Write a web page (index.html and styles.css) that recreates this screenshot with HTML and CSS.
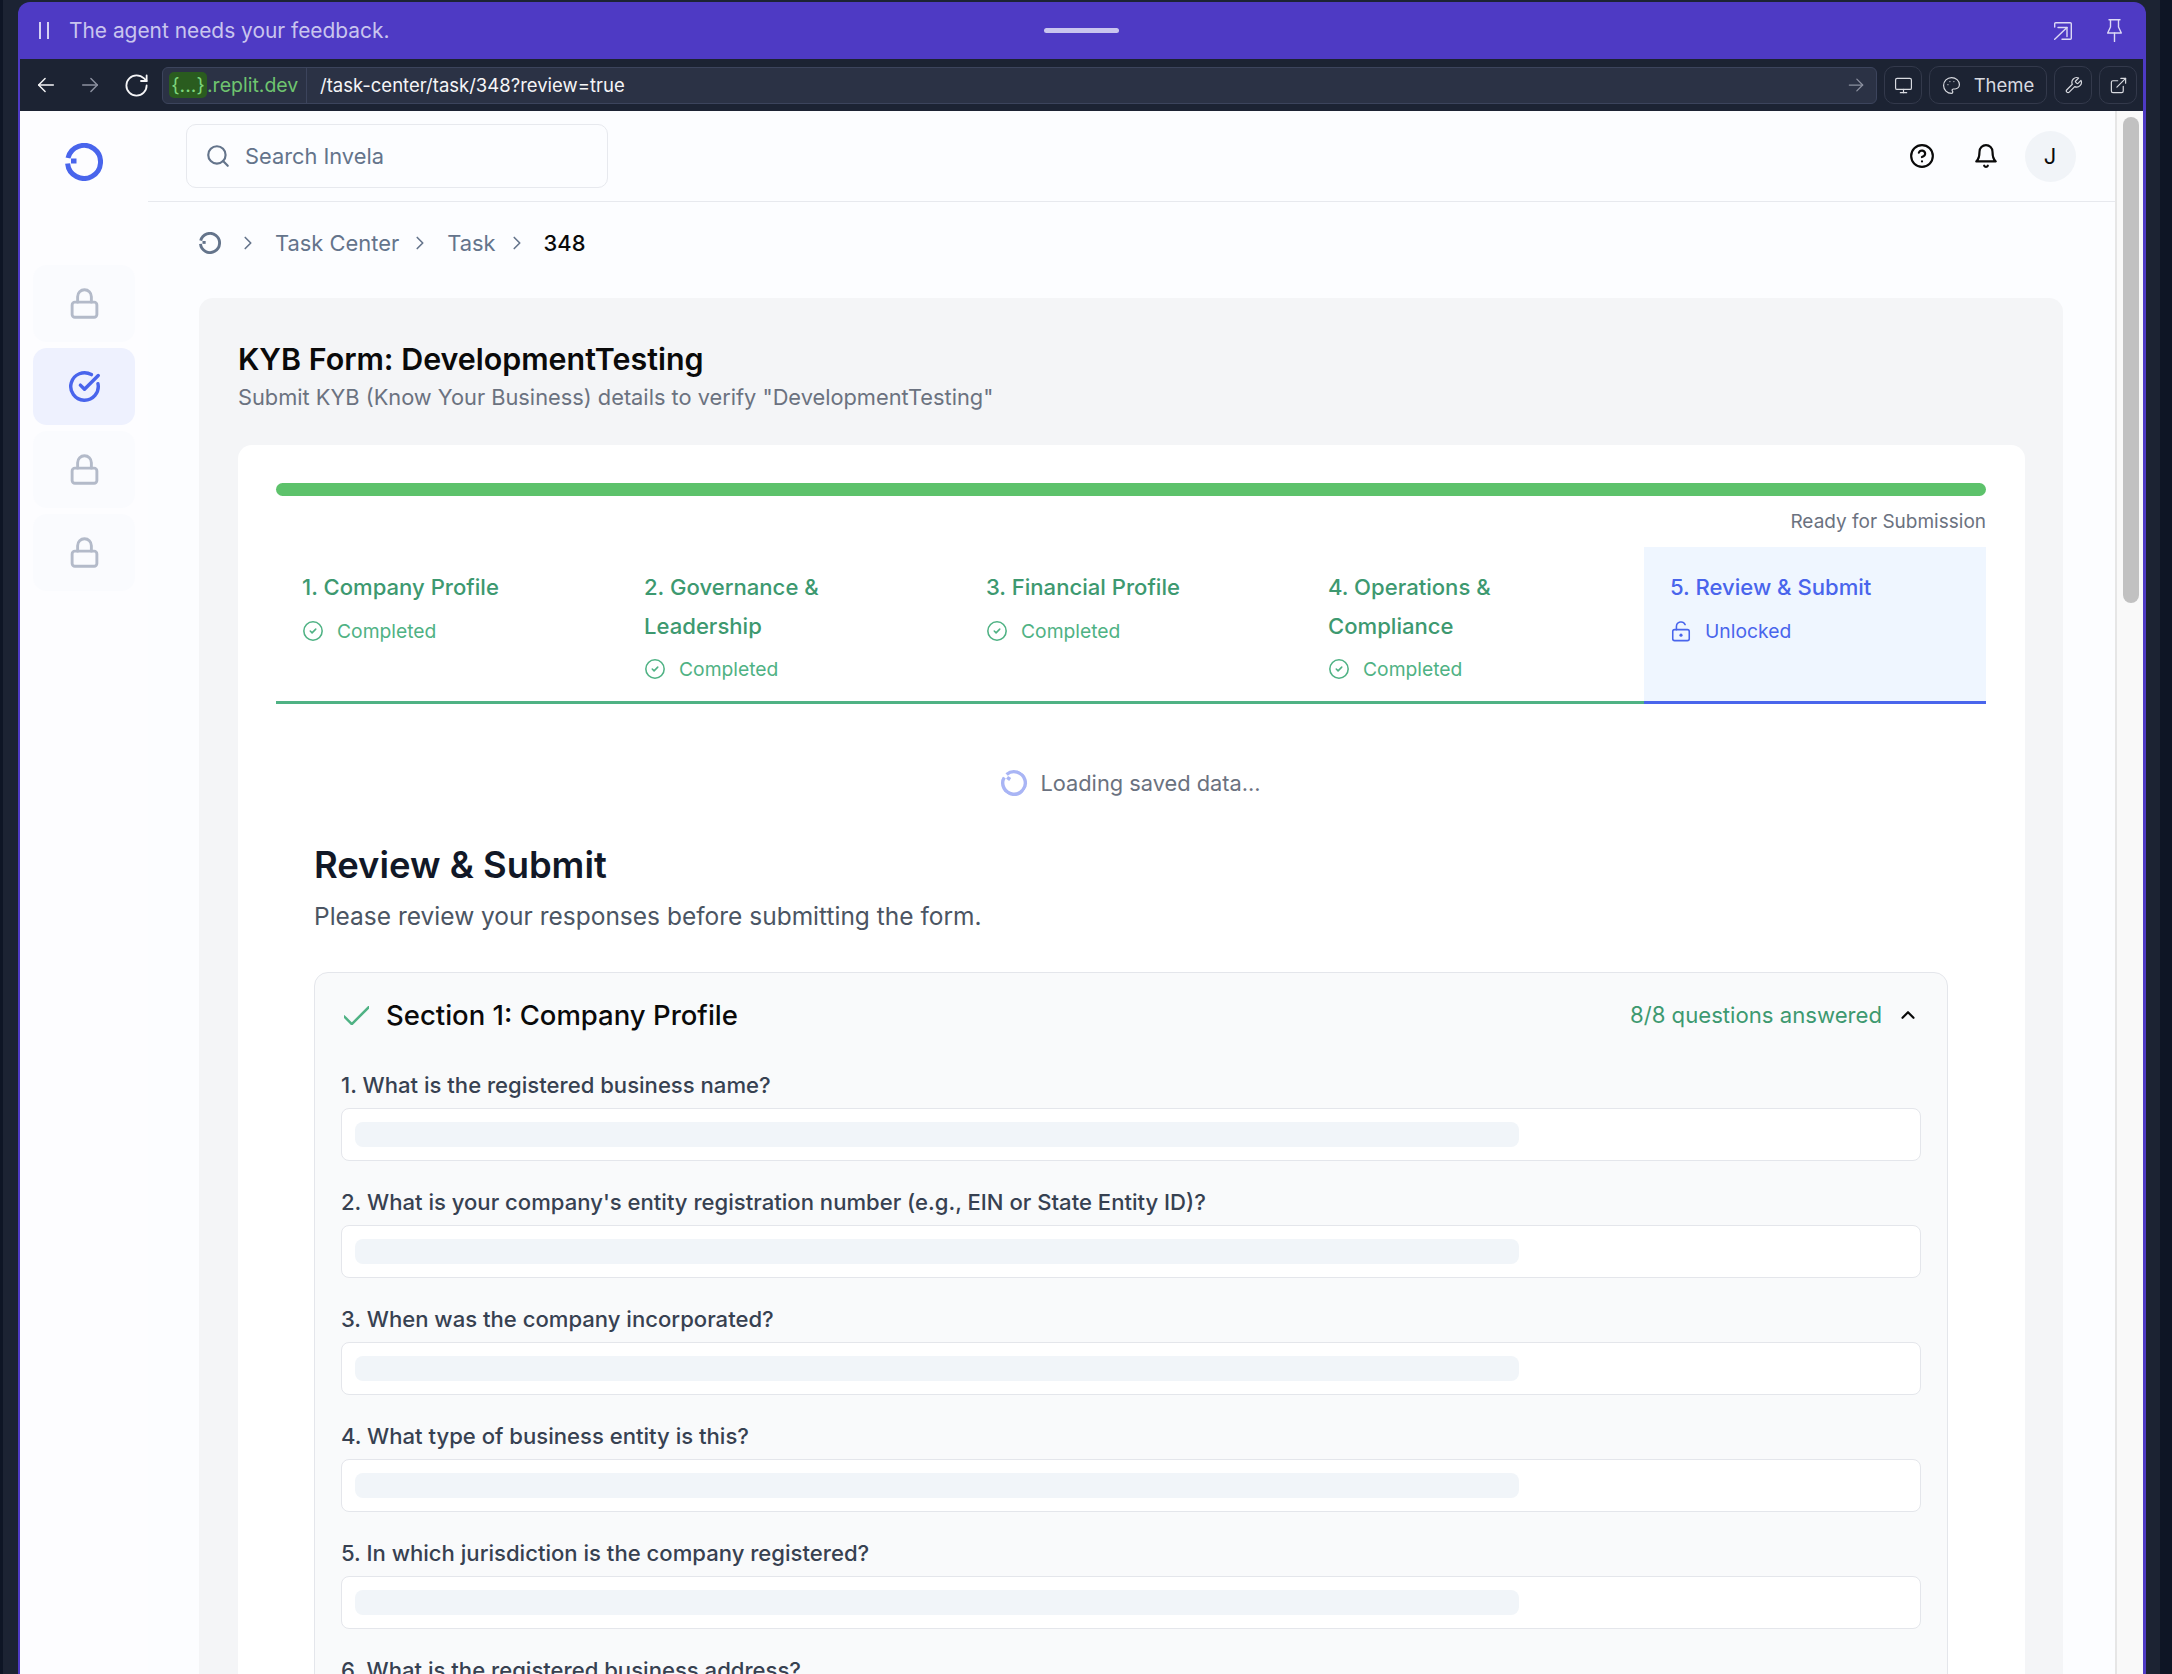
FILE: index.html
```html
<!DOCTYPE html>
<html lang="en">
<head>
  <meta charset="UTF-8">
  <title>KYB Form: DevelopmentTesting</title>
  <link rel="stylesheet" href="styles.css">
</head>
<body>
  <svg class="sprite" width="0" height="0">
    <symbol id="logo" viewBox="0 0 38 38">
      <path d="M3 15A16.5 16.5 0 1 1 2.6 20.5" fill="none" stroke="currentColor" stroke-width="5"/>
      <path d="M6 15.5h5.5v5H6z" fill="currentColor"/>
    </symbol>
    <symbol id="lock" viewBox="0 0 24 24">
      <rect x="3" y="11" width="18" height="11" rx="2"/><path d="M7 11V7a5 5 0 0 1 10 0v4"/>
    </symbol>
    <symbol id="done" viewBox="0 0 24 24">
      <circle cx="12" cy="12" r="10"/><path d="m9 12 2 2 4-4"/>
    </symbol>
    <symbol id="chev" viewBox="0 0 24 24">
      <path d="m9 18 6-6-6-6"/>
    </symbol>
  </svg>

  <div class="desk">
    <div class="frame">
      <!-- agent status bar -->
      <div class="agent-bar">
        <span class="pause"></span>
        <span class="agent-text">The agent needs your feedback.</span>
        <span class="handle"></span>
        <svg class="ico agent-open" viewBox="0 0 18 18"><path d="M.7 5V1.7a1 1 0 0 1 1-1h14.6a1 1 0 0 1 1 1v14.6a1 1 0 0 1-1 1H8"/><path d="M.7 17.3 13 5.5"/><path d="M4 5.5h9v9"/></svg>
        <svg class="ico agent-pin" viewBox="0 0 15 23"><path d="M2 .7h11"/><path d="M3.5 .7V8L.7 14h13.6l-2.8-6V.7"/><path d="M7.5 14v8.5"/></svg>
      </div>

      <div class="browser">
        <!-- url bar -->
        <div class="url-bar">
          <svg class="ico nav-ico" viewBox="0 0 24 24"><path d="M20 12H4"/><path d="m11 19-7-7 7-7"/></svg>
          <svg class="ico nav-ico dim" viewBox="0 0 24 24"><path d="M4 12h16"/><path d="m13 5 7 7-7 7"/></svg>
          <svg class="ico nav-ico" viewBox="0 0 24 24"><path d="M21 12a9 9 0 1 1-9-9c2.52 0 4.93 1 6.74 2.74L21 8"/><path d="M21 3v5h-5"/></svg>
          <div class="url-box">
            <span class="url-chip">{...}</span><span class="url-domain">.replit.dev</span>
            <span class="url-path">/task-center/task/348?review=true</span>
            <svg class="ico url-go" viewBox="0 0 24 24"><path d="M4 12h16"/><path d="m13 5 7 7-7 7"/></svg>
          </div>
          <span class="tool-btn">
            <svg class="ico tool-ico" viewBox="0 0 24 24"><rect x="2" y="3" width="20" height="14" rx="2"/><path d="M8 21h8"/><path d="M12 17v4"/></svg>
          </span>
          <span class="tool-btn theme-btn">
            <svg class="ico tool-ico" viewBox="0 0 24 24"><path d="M12 2C6.5 2 2 6.5 2 12s4.5 10 10 10c.926 0 1.648-.746 1.648-1.688 0-.437-.18-.835-.437-1.125-.29-.289-.438-.652-.438-1.125a1.64 1.64 0 0 1 1.668-1.668h1.996c3.051 0 5.555-2.503 5.555-5.554C21.965 6.012 17.461 2 12 2z"/><path d="M7.5 11h.01"/><path d="M10 7h.01"/><path d="M15 7h.01"/></svg>
            Theme
          </span>
          <span class="tool-btn">
            <svg class="ico tool-ico" viewBox="0 0 24 24"><path d="M14.7 6.3a1 1 0 0 0 0 1.4l1.6 1.6a1 1 0 0 0 1.4 0l3.77-3.77a6 6 0 0 1-7.94 7.94l-6.91 6.91a2.12 2.12 0 0 1-3-3l6.91-6.91a6 6 0 0 1 7.94-7.94l-3.76 3.76z"/></svg>
          </span>
          <span class="tool-btn">
            <svg class="ico tool-ico" viewBox="0 0 24 24"><path d="M15 3h6v6"/><path d="M10 14 21 3"/><path d="M18 13v6a2 2 0 0 1-2 2H5a2 2 0 0 1-2-2V8a2 2 0 0 1 2-2h6"/></svg>
          </span>
        </div>

        <div class="app">
          <!-- sidebar -->
          <aside class="sidebar">
            <svg class="side-logo"><use href="#logo"/></svg>
            <div class="side-item"><svg class="ico side-ico"><use href="#lock"/></svg></div>
            <div class="side-item active">
              <svg class="ico side-ico" viewBox="0 0 24 24"><path d="M21.801 10A10 10 0 1 1 17 3.335"/><path d="m9 11 3 3L22 4"/></svg>
            </div>
            <div class="side-item"><svg class="ico side-ico"><use href="#lock"/></svg></div>
            <div class="side-item"><svg class="ico side-ico"><use href="#lock"/></svg></div>
          </aside>

          <main class="main">
            <header class="top-bar">
              <div class="search">
                <svg class="ico search-ico" viewBox="0 0 24 24"><circle cx="11" cy="11" r="8"/><path d="m21 21-4.3-4.3"/></svg>
                Search Invela
              </div>
              <svg class="ico top-ico" viewBox="0 0 24 24"><circle cx="12" cy="12" r="10"/><path d="M9.09 9a3 3 0 0 1 5.83 1c0 2-3 3-3 3"/><path d="M12 17h.01"/></svg>
              <svg class="ico top-ico" viewBox="0 0 24 24"><path d="M6 8a6 6 0 0 1 12 0c0 7 3 9 3 9H3s3-2 3-9"/><path d="M10.3 21a1.94 1.94 0 0 0 3.4 0"/></svg>
              <div class="avatar">J</div>
            </header>

            <nav class="crumbs">
              <svg class="crumb-logo"><use href="#logo"/></svg>
              <svg class="ico crumb-chev"><use href="#chev"/></svg>
              <span>Task Center</span>
              <svg class="ico crumb-chev"><use href="#chev"/></svg>
              <span>Task</span>
              <svg class="ico crumb-chev"><use href="#chev"/></svg>
              <span class="crumb-now">348</span>
            </nav>

            <section class="task-card">
              <h1 class="task-title">KYB Form: DevelopmentTesting</h1>
              <p class="task-sub">Submit KYB (Know Your Business) details to verify "DevelopmentTesting"</p>

              <div class="form-card">
                <div class="progress"></div>
                <div class="progress-label">Ready for Submission</div>

                <div class="tabs">
                  <div class="tab">
                    <div class="tab-title">1. Company Profile</div>
                    <div class="tab-status"><svg class="ico status-ico"><use href="#done"/></svg>Completed</div>
                  </div>
                  <div class="tab">
                    <div class="tab-title">2. Governance &amp; Leadership</div>
                    <div class="tab-status"><svg class="ico status-ico"><use href="#done"/></svg>Completed</div>
                  </div>
                  <div class="tab">
                    <div class="tab-title">3. Financial Profile</div>
                    <div class="tab-status"><svg class="ico status-ico"><use href="#done"/></svg>Completed</div>
                  </div>
                  <div class="tab">
                    <div class="tab-title">4. Operations &amp; Compliance</div>
                    <div class="tab-status"><svg class="ico status-ico"><use href="#done"/></svg>Completed</div>
                  </div>
                  <div class="tab current">
                    <div class="tab-title">5. Review &amp; Submit</div>
                    <div class="tab-status">
                      <svg class="ico status-ico" viewBox="0 0 24 24"><rect x="3" y="10.5" width="18" height="12" rx="2"/><path d="M7 10.5V7a5 5 0 0 1 9.5-2"/><path class="key-dot" d="M12 16.5h.01"/></svg>Unlocked
                    </div>
                  </div>
                </div>

                <div class="loading">
                  <svg class="spinner"><use href="#logo"/></svg>
                  Loading saved data...
                </div>

                <div class="review">
                  <h2 class="review-title">Review &amp; Submit</h2>
                  <p class="review-sub">Please review your responses before submitting the form.</p>

                  <div class="section">
                    <div class="section-head">
                      <svg class="ico section-check" viewBox="4 5.5 16 12"><path d="M20 6 9 17l-5-5"/></svg>
                      <h3 class="section-title">Section 1: Company Profile</h3>
                      <span class="section-count">8/8 questions answered</span>
                      <svg class="ico section-chev" viewBox="0 0 24 24"><path d="m18 15-6-6-6 6"/></svg>
                    </div>

                    <div class="question">
                      <div class="q-label">1. What is the registered business name?</div>
                      <div class="q-field"><div class="q-skeleton"></div></div>
                    </div>
                    <div class="question">
                      <div class="q-label">2. What is your company's entity registration number (e.g., EIN or State Entity ID)?</div>
                      <div class="q-field"><div class="q-skeleton"></div></div>
                    </div>
                    <div class="question">
                      <div class="q-label">3. When was the company incorporated?</div>
                      <div class="q-field"><div class="q-skeleton"></div></div>
                    </div>
                    <div class="question">
                      <div class="q-label">4. What type of business entity is this?</div>
                      <div class="q-field"><div class="q-skeleton"></div></div>
                    </div>
                    <div class="question">
                      <div class="q-label">5. In which jurisdiction is the company registered?</div>
                      <div class="q-field"><div class="q-skeleton"></div></div>
                    </div>
                    <div class="question">
                      <div class="q-label">6. What is the registered business address?</div>
                      <div class="q-field"><div class="q-skeleton"></div></div>
                    </div>
                  </div>
                </div>
              </div>
            </section>
          </main>

          <div class="scroll-track"><div class="scroll-thumb"></div></div>
        </div>
      </div>
    </div>
  </div>
</body>
</html>
```

FILE: styles.css
```css
/* General styles */
html, body {
  height: 1674px;
  overflow: hidden;
}

body {
  margin: 0;
  padding-left: 3px;
  background-color: #0e1525;
  font-family: Inter, "Liberation Sans", sans-serif;
  color: #111827;
}

h1, h2, h3, p {
  margin: 0;
}

.sprite {
  display: block;
}

.ico {
  display: block;
  flex: none;
  fill: none;
  stroke: currentColor;
  stroke-width: 2;
  stroke-linecap: round;
  stroke-linejoin: round;
}

.desk {
  width: 2157px;
  height: 1674px;
  padding: 2px 14px 0 15px;
  box-sizing: border-box;
  background-color: #1c2333;
}

.frame {
  width: 2128px;
  height: 1672px;
  padding: 0 3px 0 2px;
  box-sizing: border-box;
  display: flex;
  flex-direction: column;
  background-color: #4e3ac4;
  border-radius: 12px 12px 0 0;
}

/* Agent bar */
.agent-bar {
  height: 57px;
  flex: none;
  display: flex;
  align-items: center;
  padding-left: 19px;
  color: #dcd9f5;
}

.pause {
  width: 6px;
  height: 17px;
  margin-right: 20px;
  border-left: 2px solid #d5d1f3;
  border-right: 2px solid #d5d1f3;
}

.agent-text {
  width: 320px;
  font-size: 20.9px;
  white-space: nowrap;
  color: #c9c5ee;
}

.handle {
  width: 75px;
  height: 5px;
  margin-left: 655px;
  border-radius: 3px;
  background-color: #c9c5ee;
}

.agent-open {
  width: 18px;
  height: 18px;
  margin-left: 935px;
  stroke-width: 1.4;
}

.agent-pin {
  width: 15px;
  height: 23px;
  margin-left: 35px;
  stroke-width: 1.4;
}

/* Browser chrome */
.browser {
  flex: 1;
  min-height: 0;
  display: flex;
  flex-direction: column;
}

.url-bar {
  height: 52px;
  flex: none;
  display: flex;
  align-items: center;
  padding-left: 15px;
  background-color: #1c2333;
  color: #f5f5f7;
}

.nav-ico {
  width: 22px;
  height: 22px;
  margin-right: 22px;
  stroke-width: 1.6;
}

.nav-ico:nth-child(3) {
  width: 27px;
  height: 27px;
  margin-right: 12px;
}

.nav-ico.dim {
  color: #8c91a0;
}

.url-box {
  width: 1715px;
  height: 37px;
  box-sizing: border-box;
  display: flex;
  align-items: center;
  padding-left: 6px;
  border: 1px solid #3c445c;
  border-radius: 6px;
  background-color: #2b3245;
  font-size: 19.5px;
  white-space: nowrap;
}

.url-chip {
  height: 26px;
  width: 38px;
  display: flex;
  align-items: center;
  justify-content: center;
  border-radius: 5px;
  background-color: #2a5c1f;
  color: #7ed67c;
}

.url-domain {
  width: 100px;
  height: 35px;
  line-height: 35px;
  box-sizing: border-box;
  border-right: 1px solid #3c445c;
  color: #6fc46f;
}

.url-path {
  margin-left: 13px;
  font-size: 18.5px;
  color: #f5f5f7;
}

.url-go {
  width: 20px;
  height: 20px;
  margin-left: auto;
  margin-right: 10px;
  color: #8c91a0;
  stroke-width: 1.5;
}

.tool-btn {
  width: 38px;
  height: 38px;
  flex: none;
  box-sizing: border-box;
  display: flex;
  align-items: center;
  justify-content: center;
  margin-left: 7px;
  border: 1px solid #33394b;
  border-radius: 10px;
  color: #d8dae0;
  font-size: 18.5px;
}

.theme-btn {
  width: 118px;
  gap: 13px;
}

.tool-ico {
  width: 19px;
  height: 19px;
  stroke-width: 1.5;
}

/* App layout */
.app {
  flex: 1;
  min-height: 0;
  display: flex;
  overflow: hidden;
  background-color: #fcfdff;
}

.sidebar {
  width: 128px;
  flex: none;
  padding: 32px 13px 0;
  box-sizing: border-box;
  display: flex;
  flex-direction: column;
  background-color: #fdfdff;
}

.side-logo {
  width: 38px;
  height: 38px;
  margin: 0 auto 84px;
  color: #4965ec;
}

.side-item {
  height: 77px;
  margin-bottom: 6px;
  display: flex;
  align-items: center;
  justify-content: center;
  border-radius: 14px;
  background-color: #fafbfe;
  color: #b3bac9;
}

.side-item.active {
  background-color: #eef1fe;
  color: #4965ec;
}

.side-ico {
  width: 33px;
  height: 33px;
  stroke-width: 2.1;
}

.side-item.active .side-ico {
  stroke-width: 2.5;
}

.main {
  width: 1966.5px;
  flex: none;
}

/* Top bar */
.top-bar {
  height: 91px;
  box-sizing: border-box;
  display: flex;
  align-items: center;
  padding: 0 39px 0 38px;
  border-bottom: 1px solid #e7e9ee;
}

.search {
  width: 422px;
  height: 64px;
  box-sizing: border-box;
  display: flex;
  align-items: center;
  gap: 14px;
  margin-right: auto;
  padding-left: 18px;
  border: 1px solid #e7e9ee;
  border-radius: 10px;
  font-size: 21.8px;
  color: #64748b;
}

.search-ico {
  width: 26px;
  height: 26px;
}

.top-ico {
  width: 26px;
  height: 26px;
  color: #0a0a0a;
  margin-right: 38px;
}

.top-ico + .top-ico {
  margin-right: 25px;
}

.avatar {
  width: 51px;
  height: 51px;
  margin-left: 1px;
  display: flex;
  align-items: center;
  justify-content: center;
  border-radius: 50%;
  background-color: #f1f4f8;
  font-size: 22px;
  color: #0a0a0a;
}

/* Breadcrumb */
.crumbs {
  height: 96px;
  box-sizing: border-box;
  display: flex;
  align-items: center;
  gap: 10px;
  padding: 0 0 15px 51px;
  font-size: 21.9px;
  color: #64748b;
}

.crumb-logo {
  width: 22px;
  height: 22px;
  margin-right: 6px;
  color: #64748b;
}

.crumb-chev {
  width: 22px;
  height: 22px;
  margin-right: 6px;
  stroke-width: 1.8;
}

.crumb-now {
  font-weight: 500;
  color: #0a0a0a;
}

/* Task card */
.task-card {
  width: 1864px;
  margin-left: 51px;
  padding: 41px 38px 0 39px;
  box-sizing: border-box;
  height: 1400px;
  border-radius: 14px;
  background-color: #f4f5f7;
}

.task-title {
  font-size: 30.4px;
  line-height: 40px;
  font-weight: 600;
  color: #0a0a0a;
}

.task-sub {
  margin-top: 3px;
  font-size: 21.8px;
  line-height: 30px;
  color: #6b7280;
}

.form-card {
  margin-top: 33px;
  padding: 38px 39px 0 38px;
  height: 1300px;
  border-radius: 14px;
  background-color: #fff;
}

.progress {
  height: 13px;
  border-radius: 7px;
  background-color: #5dc26b;
}

.progress-label {
  margin-top: 13px;
  font-size: 19px;
  line-height: 26px;
  text-align: right;
  color: #6b7280;
}

/* Step tabs */
.tabs {
  margin-top: 12px;
  display: grid;
  grid-template-columns: repeat(5, 1fr);
  border-bottom: 3px solid #4fb284;
}

.tab {
  padding: 21px 50px 18px 26px;
  margin-bottom: -3px;
  border-bottom: 3px solid transparent;
  color: #3d9970;
}

.tab-title {
  font-size: 22.1px;
  line-height: 39px;
  font-weight: 500;
}

.tab-status {
  margin-top: 10px;
  height: 28px;
  display: flex;
  align-items: center;
  gap: 13px;
  font-size: 19.3px;
  color: #4fb284;
}

.tab:nth-child(2) .tab-status,
.tab:nth-child(4) .tab-status {
  margin-top: 9px;
}

.status-ico {
  width: 22px;
  height: 22px;
  stroke-width: 1.7;
}

.key-dot {
  stroke-width: 3.4;
}

.tab.current {
  background-color: #eff6ff;
  border-bottom-color: #4965ec;
  color: #4965ec;
}

.tab.current .tab-status {
  color: #4965ec;
}

/* Loading note */
.loading {
  margin-top: 64px;
  height: 30px;
  display: flex;
  align-items: center;
  justify-content: center;
  gap: 13px;
  font-size: 21.8px;
  color: #6b7280;
}

.spinner {
  width: 26px;
  height: 26px;
  color: #a9b5f5;
  transform: rotate(35deg);
}

/* Review block */
.review {
  padding: 0 38px 0 38px;
}

.review-title {
  margin-top: 44px;
  font-size: 36.4px;
  line-height: 46px;
  font-weight: 600;
  color: #111827;
}

.review-sub {
  margin-top: 11px;
  font-size: 24.5px;
  line-height: 34px;
  color: #4b5563;
}

.section {
  margin-top: 39px;
  padding: 23px 26px 0;
  border: 1px solid #e4e6eb;
  border-radius: 14px;
  background-color: #f9fafb;
}

.section-head {
  height: 38px;
  display: flex;
  align-items: center;
  margin-bottom: 36px;
}

.section-check {
  width: 25px;
  height: 19px;
  margin-left: 3px;
  color: #4fb284;
  stroke-width: 1.6;
}

.section-title {
  margin-left: 17px;
  font-size: 27.5px;
  font-weight: 500;
  color: #0a0a0a;
}

.section-count {
  margin-left: auto;
  font-size: 22.15px;
  color: #3d9970;
}

.section-chev {
  width: 22px;
  height: 22px;
  margin-left: 15px;
  margin-right: 2px;
  color: #0a0a0a;
  stroke-width: 2.4;
}

.question {
  margin-top: 26px;
}

.section-head + .question {
  margin-top: 0;
}

.q-label {
  font-size: 22.1px;
  line-height: 30px;
  font-weight: 500;
  color: #374151;
}

.q-field {
  height: 53px;
  margin-top: 8px;
  padding: 13px;
  box-sizing: border-box;
  border: 1px solid #e4e6eb;
  border-radius: 8px;
  background-color: #fff;
}

.q-skeleton {
  width: 1164px;
  height: 25px;
  border-radius: 8px;
  background-color: #f1f5f9;
}

/* Page scrollbar */
.scroll-track {
  flex: 1;
  border-left: 2px solid #e6e6e6;
  background-color: #f9f9f9;
}

.scroll-thumb {
  width: 16px;
  height: 486px;
  margin: 6px 0 0 6px;
  border-radius: 8px;
  background-color: #c1c1c1;
}
```
